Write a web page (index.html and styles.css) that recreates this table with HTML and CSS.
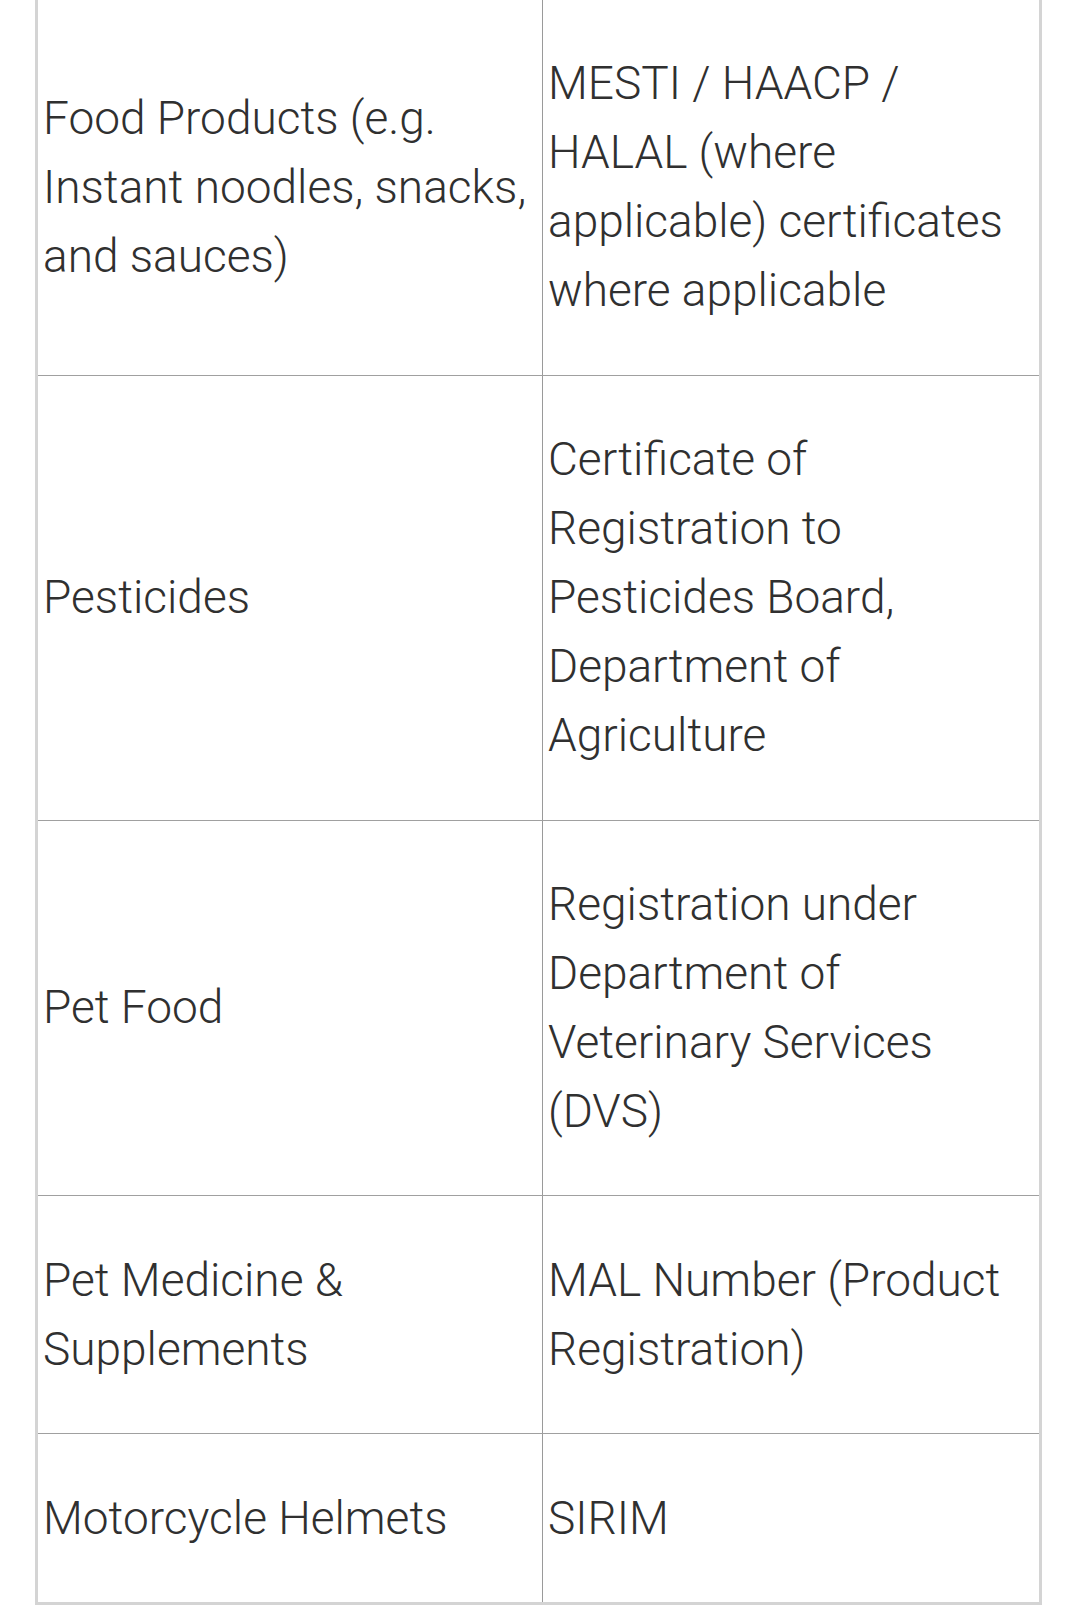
FILE: index.html
```html
<!DOCTYPE html>
<html lang="en">
<head>
<meta charset="utf-8">
<title>Product certificates</title>
<link rel="stylesheet" href="styles.css">
</head>
<body>
<div class="wrap">
<table class="cert-table">
  <colgroup><col class="col-a"><col class="col-b"></colgroup>
  <tbody>
    <tr>
      <td>Food Products (e.g. Instant noodles, snacks, and sauces)</td>
      <td>MESTI / HAACP / HALAL (where applicable) certificates where applicable</td>
    </tr>
    <tr>
      <td>Pesticides</td>
      <td>Certificate of Registration to Pesticides Board, Department of Agriculture</td>
    </tr>
    <tr>
      <td>Pet Food</td>
      <td>Registration under Department of Veterinary Services (DVS)</td>
    </tr>
    <tr>
      <td>Pet Medicine &amp; Supplements</td>
      <td>MAL Number (Product Registration)</td>
    </tr>
    <tr>
      <td>Motorcycle Helmets</td>
      <td>SIRIM</td>
    </tr>
  </tbody>
</table>
</div>
</body>
</html>
```
FILE: styles.css
```css
html, body {
  margin: 0;
  padding: 0;
  background: #ffffff;
}
.wrap {
  padding: 0 38px 0 35px;
  margin-top: -3px;
}
.cert-table {
  width: 1007px;
  border-collapse: collapse;
  border: 3px solid #d4d4d4;
  font-family: Roboto, "Liberation Sans", sans-serif;
  font-weight: 300;
  font-size: 46px;
  line-height: 69px;
  color: #303030;
}
.col-a { width: 506px; }
.col-b { width: 498px; }
.cert-table td {
  border-top: 1.5px solid #a0a0a0;
  border-bottom: 1.5px solid #a0a0a0;
  padding: 49.4px 4px 49.4px 5px;
  vertical-align: middle;
  text-align: left;
}
.cert-table td + td {
  border-left: 1.5px solid #9a9a9a;
}
```
